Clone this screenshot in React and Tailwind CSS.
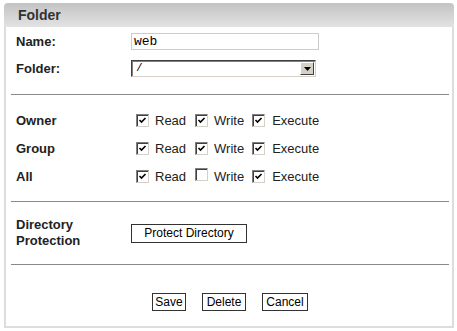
import React from 'react';

const font = { fontFamily: '"Liberation Sans", Arial, sans-serif' };

function Check({ on }) {
  return (
    <span className="inline-flex h-[13px] w-[13px] items-center justify-center border border-[#808080] border-r-[#d4d0c8] border-b-[#d4d0c8] bg-white shadow-[inset_1px_1px_0_#404040]">
      {on && (
        <svg width="9" height="9" viewBox="0 0 9 9">
          <path d="M1.5 4 L3.5 6 L7.5 2" stroke="#000" strokeWidth="1.6" fill="none" />
        </svg>
      )}
    </span>
  );
}

function Perm({ label, r, w, x }) {
  return (
    <div className="flex h-[28px] items-center">
      <div className="w-[125px] pl-[10px] text-[13px] font-bold text-[#222]">{label}</div>
      <div className="flex items-center text-[13px] text-[#222]">
        <span className="ml-[5px]"><Check on={r} /></span>
        <span className="ml-[6px]">Read</span>
        <span className="ml-[9px]"><Check on={w} /></span>
        <span className="ml-[6px]">Write</span>
        <span className="ml-[8px]"><Check on={x} /></span>
        <span className="ml-[7px]">Execute</span>
      </div>
    </div>
  );
}

const btn = 'h-[18px] border border-[#333] bg-white text-[12px] leading-none text-black';

export default function App() {
  return (
    <div className="min-h-screen bg-white pl-[4px] pt-[3px]" style={font}>
      <div className="w-[450px]">
        <div className="flex h-[24px] items-center rounded-t-[4px] bg-gradient-to-b from-[#c3c3c3] to-[#e3e3e3] pl-[14px] text-[14px] font-bold text-[#333]">
          Folder
        </div>
        <div className="border-x-[2px] border-b-[2px] border-[#dddddd] bg-white">
          <div className="pt-[1px]">
            <div className="flex h-[27px] items-center">
              <div className="w-[125px] pl-[10px] text-[13px] font-bold text-[#222]">Name:</div>
              <div className="flex h-[17px] w-[188px] items-center border border-[#cccccc] bg-white pl-[2px] text-[13px] text-black" style={{ fontFamily: '"Liberation Mono", "Courier New", monospace' }}>
                web
              </div>
            </div>
            <div className="flex h-[27px] items-center">
              <div className="w-[125px] pl-[10px] text-[13px] font-bold text-[#222]">Folder:</div>
              <div className="flex h-[17px] w-[185px] items-center border border-[#404040] border-r-[#d4d0c8] border-b-[#d4d0c8] bg-white shadow-[inset_1px_1px_0_#808080]">
                <span className="flex-1 pl-[4px] text-[11px] text-black" style={{ fontFamily: '"Liberation Mono", "Courier New", monospace' }}>/</span>
                <span className="mr-[1px] flex h-[13px] w-[14px] items-center justify-center border border-[#fff] border-r-[#404040] border-b-[#404040] bg-[#d4d0c8]">
                  <svg width="7" height="4" viewBox="0 0 7 4"><path d="M0 0 H7 L3.5 4 Z" fill="#000" /></svg>
                </span>
              </div>
            </div>
          </div>
          <div className="ml-[5px] mr-[3px] mt-[12px] h-px bg-[#888]" />
          <div className="pt-[12px]">
            <Perm label="Owner" r w x />
            <Perm label="Group" r w x />
            <Perm label="All" r w={false} x />
          </div>
          <div className="ml-[5px] mr-[3px] mt-[10px] h-px bg-[#888]" />
          <div className="flex items-center pt-[15px]">
            <div className="w-[125px] pl-[10px] text-[13px] font-bold leading-[16px] text-[#222]">
              Directory<br />Protection
            </div>
            <button className="h-[19px] w-[116px] border border-[#333] bg-white text-[12px] leading-none text-black">Protect Directory</button>
          </div>
          <div className="ml-[5px] mr-[3px] mt-[15px] h-px bg-[#888]" />
          <div className="flex gap-[16px] pb-[15px] pl-[146px] pt-[28px]">
            <button className={`${btn} w-[34px]`}>Save</button>
            <button className={`${btn} w-[44px]`}>Delete</button>
            <button className={`${btn} w-[46px]`}>Cancel</button>
          </div>
        </div>
      </div>
    </div>
  );
}
